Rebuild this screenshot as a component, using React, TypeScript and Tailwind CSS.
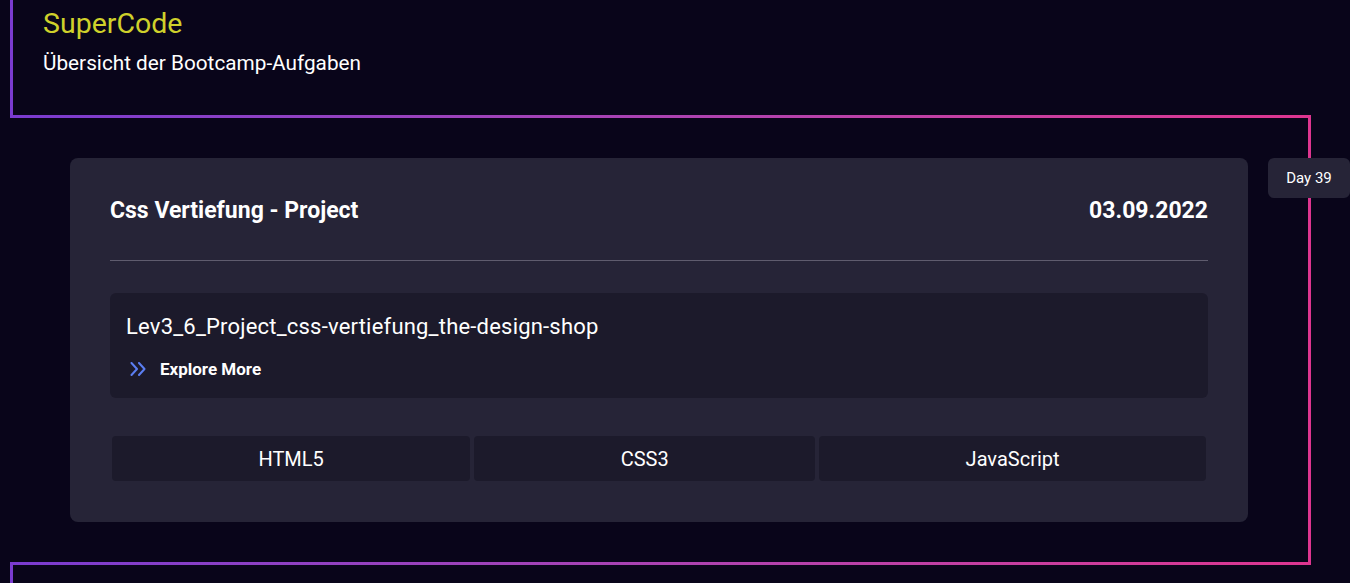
import React from "react";

const TAGS = ["HTML5", "CSS3", "JavaScript"];

// double chevron used in front of "Explore More"
const Chevrons = () => (
  <svg width="16" height="14" viewBox="0 0 16 14" fill="none" className="shrink-0">
    <path d="M1.5 1 L7 7 L1.5 13" stroke="#5b7ef2" strokeWidth="2" strokeLinecap="round" strokeLinejoin="round" />
    <path d="M9 1 L14.5 7 L9 13" stroke="#5b7ef2" strokeWidth="2" strokeLinecap="round" strokeLinejoin="round" />
  </svg>
);

const TaskCard = () => (
  <div className="rounded-lg bg-[#262437] px-10 pt-[36px] pb-[39px]">
    {/* title row */}
    <div className="flex items-center justify-between text-white font-bold text-[23px] leading-[34px]">
      <h2>Css Vertiefung - Project</h2>
      <span>03.09.2022</span>
    </div>
    <div className="mt-[32px] h-px bg-[#5f5c6e]" />

    <div className="mt-8 rounded-md bg-[#1c1a2b] pl-4 pt-[20px] pb-[17px]">
      <p className="text-white text-[22px] leading-[28px] tracking-[0.2px]">
        Lev3_6_Project_css-vertiefung_the-design-shop
      </p>
      <div className="mt-4 flex items-center gap-[14px] pl-1 text-white text-[17px] font-bold leading-6">
        <Chevrons />
        <span>Explore More</span>
      </div>
    </div>

    <div className="mt-9 flex">
      {TAGS.map((tag) => (
        <div
          key={tag}
          className="m-[2px] flex h-[45px] flex-auto items-center justify-center rounded bg-[#1c1a2b] text-[20px] text-white"
        >
          {tag}
        </div>
      ))}
    </div>
  </div>
);

export default function App() {
  return (
    <div
      className="min-h-screen overflow-hidden bg-[#09051a] pl-[10px] pr-[39px]"
      style={{ fontFamily: "Roboto, 'Noto Sans', sans-serif" }}
    >
      {/* --- HEADER block: left + bottom line --- */}
      <div className="bg-linear-to-r from-[#7a3bd0] to-[#de3590] pl-[3px] pb-[3px]">
        <div className="bg-[#09051a] pl-[30px] pt-[7px] pb-[40px]">
          <h1 className="text-[28.5px] leading-[34px] text-[#cfd12b]">SuperCode</h1>
          <p className="mt-[10px] text-[20.75px] leading-6 text-white">
            Übersicht der Bootcamp-Aufgaben
          </p>
        </div>
      </div>

      {/* --- TIMELINE ENTRY: right + bottom line --- */}
      <div className="relative bg-linear-to-r from-[#7a3bd0] to-[#de3590] pr-[3px] pb-[3px]">
        <div className="bg-[#09051a] px-[60px] py-10">
          <TaskCard />
        </div>
        <div className="absolute top-10 right-[-39px] flex h-10 w-[82px] items-center justify-center rounded-md bg-[#262437] text-[15px] text-white">
          Day 39
        </div>
      </div>

      {/* --- next entry, starts with left line --- */}
      <div className="bg-[#7a3bd0] pl-[3px]">
        <div className="h-[120px] bg-[#09051a]" />
      </div>
    </div>
  );
}
